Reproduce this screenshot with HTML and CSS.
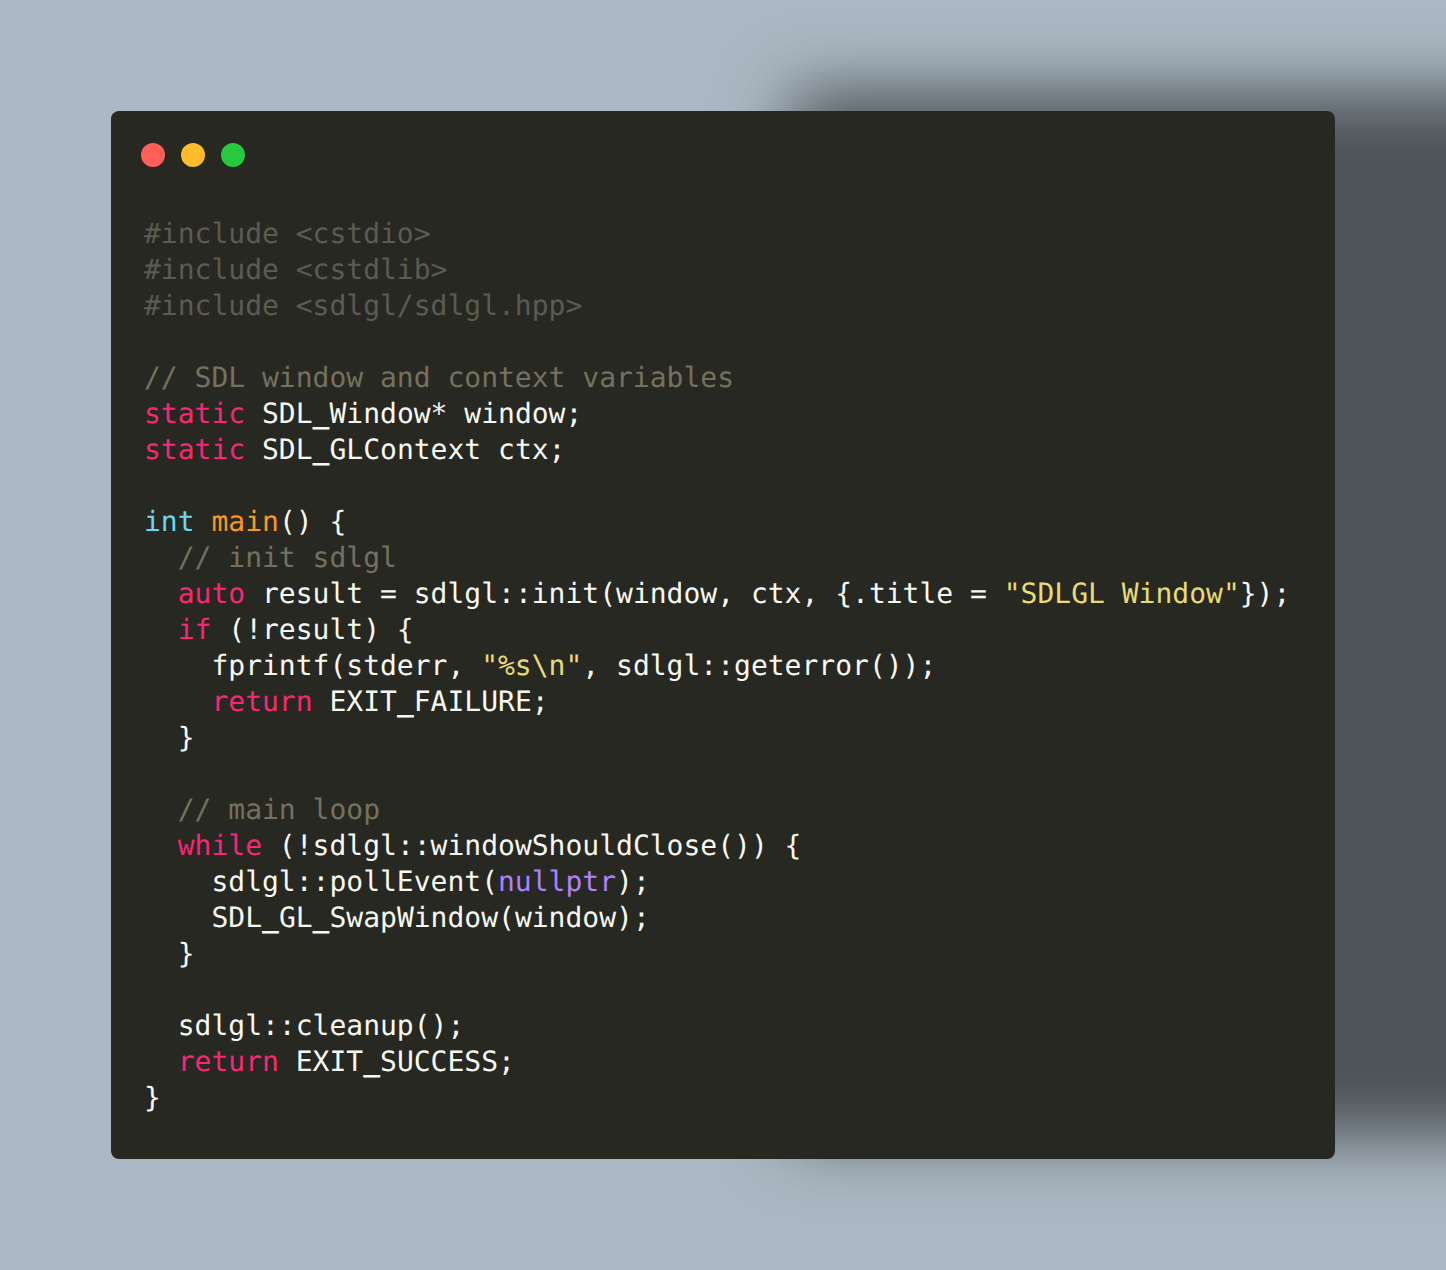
FILE: index.html
```html
<!DOCTYPE html>
<html>
<head>
<meta charset="utf-8">
<link rel="stylesheet" href="styles.css">
</head>
<body>
<div class="window">
  <div class="controls">
    <span class="dot red"></span>
    <span class="dot yellow"></span>
    <span class="dot green"></span>
  </div>
<pre class="code"><span class="pp">#include &lt;cstdio&gt;</span>
<span class="pp">#include &lt;cstdlib&gt;</span>
<span class="pp">#include &lt;sdlgl/sdlgl.hpp&gt;</span>

<span class="cm">// SDL window and context variables</span>
<span class="kw">static</span> SDL<span class="u">_</span>Window* window;
<span class="kw">static</span> SDL<span class="u">_</span>GLContext ctx;

<span class="ty">int</span> <span class="fn">main</span>() {
  <span class="cm">// init sdlgl</span>
  <span class="kw">auto</span> result = sdlgl::init(window, ctx, {.title = <span class="st">"SDLGL Window"</span>});
  <span class="kw">if</span> (!result) {
    fprintf(stderr, <span class="st">"%s\n"</span>, sdlgl::geterror());
    <span class="kw">return</span> EXIT<span class="u">_</span>FAILURE;
  }

  <span class="cm">// main loop</span>
  <span class="kw">while</span> (!sdlgl::windowShouldClose()) {
    sdlgl::pollEvent(<span class="cn">nullptr</span>);
    SDL<span class="u">_</span>GL<span class="u">_</span>SwapWindow(window);
  }

  sdlgl::cleanup();
  <span class="kw">return</span> EXIT<span class="u">_</span>SUCCESS;
}</pre>
</div>
</body>
</html>
```

FILE: styles.css
```css
html, body {
  margin: 0;
  padding: 0;
}
body {
  width: 1446px;
  height: 1270px;
  background: #abb8c3;
  overflow: hidden;
  padding: 111px 0 0 111px;
  box-sizing: border-box;
}
.window {
  width: 1224px;
  height: 1048px;
  box-sizing: border-box;
  background: #272822;
  border-radius: 8px;
  box-shadow: 680px -20px 68px rgba(0, 0, 0, 0.55);
  padding: 32px 30px 0 33px;
}
.controls {
  display: flex;
  gap: 16px;
  margin-left: -3px;
}
.dot {
  width: 24px;
  height: 24px;
  border-radius: 50%;
  display: block;
}
.red { background: #ff5f56; }
.yellow { background: #ffbd2e; }
.green { background: #27c93f; }
.code {
  margin: 49px 0 0 0;
  font-family: "DejaVu Sans Mono", monospace;
  font-size: 28px;
  line-height: 36px;
  color: #f8f8f2;
  text-rendering: geometricPrecision;
}
.u { font-weight: bold; }
.pp { color: #5b5b52; }
.cm { color: #75715e; }
.kw { color: #f92672; }
.ty { color: #66d9ef; }
.fn { color: #fd971f; }
.st { color: #e6db74; }
.cn { color: #ae81ff; }
```
